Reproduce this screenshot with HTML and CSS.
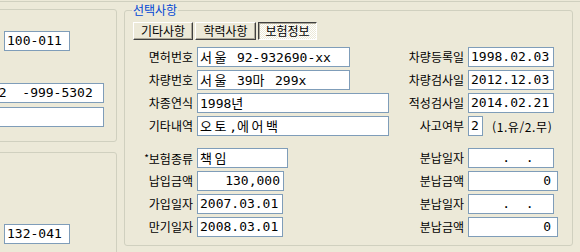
FILE: index.html
```html
<!DOCTYPE html>
<html lang="ko">
    <head>
        <meta charset="UTF-8" />
        <title>보험정보</title>
        <link rel="stylesheet" href="styles.css">
    </head>
    <body>
        <div class="screen">
            <div class="top-line"></div>
            <div class="main">
                <!-- 왼쪽 주소 영역 (일부만 보임) -->
                <div class="side">
                    <div class="box box-upper">
                        <div class="field zip">100-011</div>
                        <div class="field phone">02  -999-5302</div>
                        <div class="field address"></div>
                    </div>
                    <div class="box box-lower">
                        <div class="field zip zip-lower">132-041</div>
                    </div>
                </div>

                <!-- 선택사항 -->
                <div class="group">
                    <span class="legend">선택사항</span>
                    <div class="tabs">
                        <button class="tab tab-etc">기타사항</button>
                        <button class="tab tab-edu">학력사항</button>
                        <button class="tab tab-ins active">보험정보</button>
                    </div>

                    <div class="form-grid">
                        <label>면허번호</label>
                        <div class="field w153"><span class="w">서울</span> 92-932690-xx</div>
                        <label>차량등록일</label>
                        <div class="field date">1998.02.03</div>

                        <label>차량번호</label>
                        <div class="field w153"><span class="w">서울</span> 39<span class="w">마</span> 299x</div>
                        <label>차량검사일</label>
                        <div class="field date">2012.12.03</div>

                        <label>차종연식</label>
                        <div class="field w192">1998<span class="w">년</span></div>
                        <label>적성검사일</label>
                        <div class="field date">2014.02.21</div>

                        <label>기타내역</label>
                        <div class="field w192"><span class="w">오토</span>,<span class="w">에어백</span></div>
                        <label>사고여부</label>
                        <div class="accident">
                            <div class="field flag">2</div>
                            <span class="hint">(1.유/2.무)</span>
                        </div>
                    </div>

                    <div class="form-grid lower">
                        <label><span class="star">*</span>보험종류</label>
                        <div class="field w91"><span class="w">책임</span></div>
                        <label>분납일자</label>
                        <div class="field date">    .  .  </div>

                        <label>납입금액</label>
                        <div class="field amount">130,000</div>
                        <label>분납금액</label>
                        <div class="field split">0</div>

                        <label>가입일자</label>
                        <div class="field date">2007.03.01</div>
                        <label>분납일자</label>
                        <div class="field date">    .  .  </div>

                        <label>만기일자</label>
                        <div class="field date">2008.03.01</div>
                        <label>분납금액</label>
                        <div class="field split">0</div>
                    </div>
                </div>
            </div>
        </div>
    </body>
</html>
```

FILE: styles.css
```css
body {
    margin: 0;
    background-color: #ece9d8;
    font-family: "Noto Sans CJK KR", sans-serif;
    font-size: 12px;
    color: #000;
    overflow: hidden;
}

.screen {
    width: 580px;
    height: 252px;
    overflow: hidden;
    padding-top: 1px;
    box-sizing: border-box;
}

.top-line {
    height: 1px;
    background-color: #d0d0bf;
}

.main {
    display: flex;
    align-items: flex-start;
}

/* 왼쪽 박스 */
.side {
    flex: none;
    width: 127px;
    margin-left: -10px;
}

.box {
    box-sizing: border-box;
    border: 1px solid #d0d0bf;
    border-radius: 3px;
}

.box-upper {
    height: 133px;
    margin-top: 7px;
    padding-top: 21px;
}

.box-lower {
    height: 130px;
    margin-top: 10px;
    padding-top: 71px;
}

/* 입력칸 */
.field {
    box-sizing: border-box;
    height: 20px;
    border: 1px solid #7f9db9;
    background-color: #fff;
    font-family: "DejaVu Sans Mono", "Noto Sans CJK KR", monospace;
    font-size: 13px;
    line-height: 18px;
    padding: 0 2px;
    white-space: pre;
    overflow: hidden;
}

.field .w {
    font-family: "Noto Sans CJK KR", sans-serif;
    letter-spacing: 2.6px;
}

.zip {
    width: 66px;
    margin-left: 13px;
}

.phone {
    width: 117px;
    margin-left: -4px;
    margin-top: 32px;
    padding-left: 3px;
}

.address {
    width: 117px;
    margin-left: -4px;
    margin-top: 4px;
}

/* 선택사항 그룹 */
.group {
    position: relative;
    flex: none;
    box-sizing: border-box;
    width: 449px;
    height: 236px;
    margin-left: 7px;
    margin-top: 8px;
    padding: 11px 0 0 8px;
    border: 1px solid #d0d0bf;
    border-radius: 3px;
}

.legend {
    position: absolute;
    top: -8px;
    left: 7px;
    padding: 0 1px;
    background-color: #ece9d8;
    color: #0046d5;
    line-height: 14px;
}

.tabs {
    display: flex;
    gap: 2px;
}

.tab {
    box-sizing: border-box;
    height: 18px;
    padding: 0;
    font-family: "Noto Sans CJK KR", sans-serif;
    font-size: 12px;
    line-height: 16px;
    color: #000;
    background-color: #ece9d8;
    border: 1px solid;
    border-color: #fff #404040 #404040 #fff;
    box-shadow: inset -1px -1px #aca899;
}

.tab-etc {
    width: 60px;
}

.tab-edu {
    width: 61px;
}

.tab-ins {
    width: 59px;
}

.tab.active {
    background: repeating-conic-gradient(#fff 0 25%, #ece9d8 0 50%) 0 0 / 2px 2px;
    border-color: #404040 #fff #fff #404040;
    box-shadow: inset 1px 1px #aca899;
}

.form-grid {
    display: grid;
    grid-template-columns: 60px 199px 64px 1fr;
    grid-auto-rows: 20px;
    column-gap: 4px;
    row-gap: 3px;
    margin-top: 7px;
}

.form-grid.lower {
    margin-top: 12px;
}

.form-grid label {
    text-align: right;
    line-height: 20px;
    white-space: nowrap;
}

.star {
    font-size: 10px;
    vertical-align: 2px;
}

.w153 {
    width: 153px;
}

.w192 {
    width: 192px;
}

.w91 {
    width: 91px;
}

.date {
    width: 86px;
}

.amount {
    width: 87px;
    text-align: right;
    padding-right: 3px;
}

.split {
    width: 90px;
    text-align: right;
    padding-right: 6px;
}

.accident {
    display: flex;
    align-items: center;
    gap: 9px;
}

.flag {
    width: 15px;
    padding: 0 0 0 2px;
}

.hint {
    white-space: nowrap;
    letter-spacing: 0.6px;
}
```
